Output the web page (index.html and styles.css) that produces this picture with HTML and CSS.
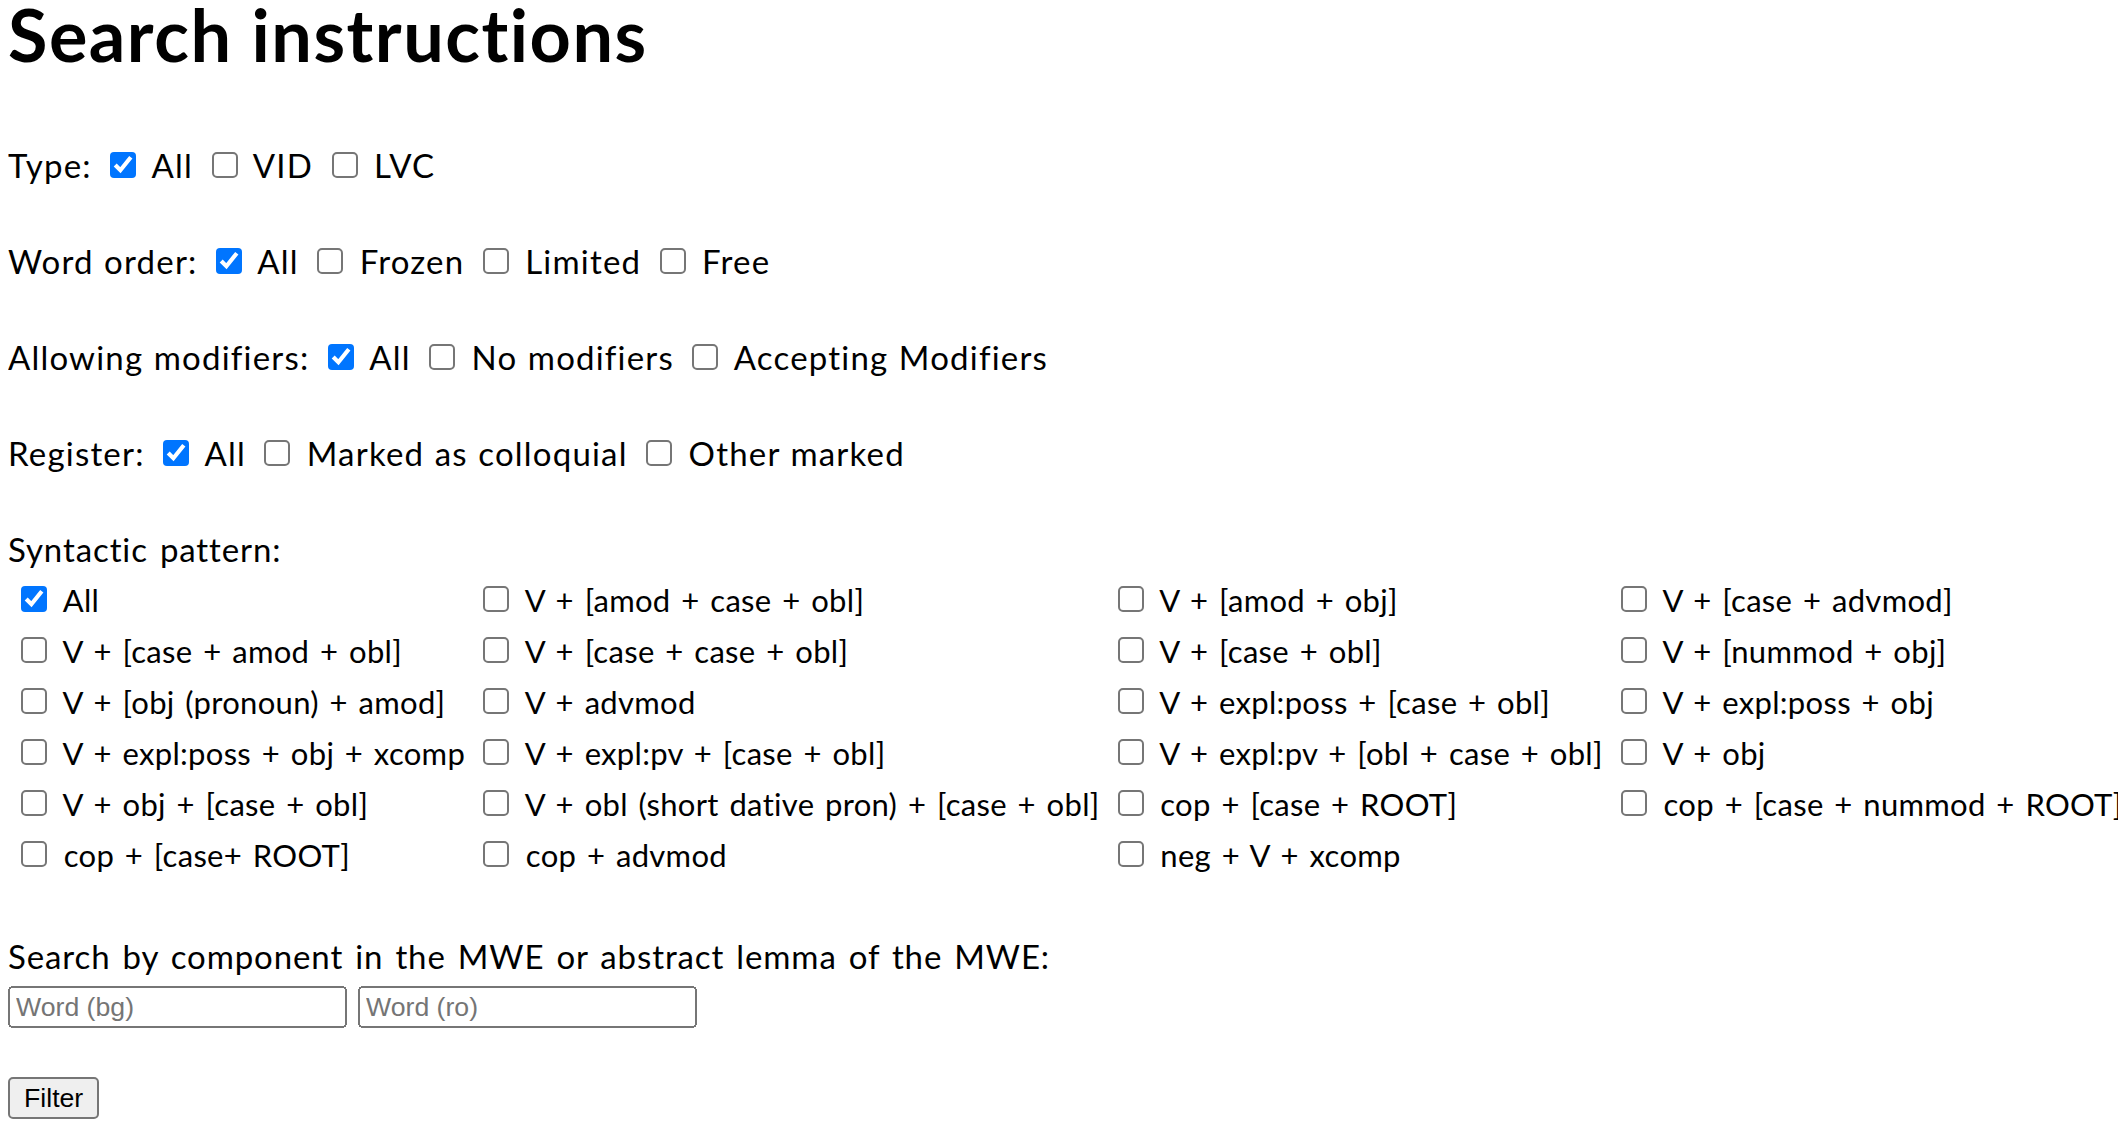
FILE: index.html
```html
<!DOCTYPE html>
<html lang="en">
<head>
<meta charset="utf-8">
<title>Search instructions</title>
<link rel="stylesheet" href="styles.css">
</head>
<body>
<h1 class="title">Search instructions</h1>
<form class="search-form">
  <div class="filter-row">Type: <input type="checkbox" checked> All <input type="checkbox"> VID <input type="checkbox"> LVC</div>
  <div class="filter-row">Word order: <input type="checkbox" checked> All <input type="checkbox"> Frozen <input type="checkbox"> Limited <input type="checkbox"> Free</div>
  <div class="filter-row">Allowing modifiers: <input type="checkbox" checked> All <input type="checkbox"> No modifiers <input type="checkbox"> Accepting Modifiers</div>
  <div class="filter-row">Register: <input type="checkbox" checked> All <input type="checkbox"> Marked as colloquial <input type="checkbox"> Other marked</div>
  <div class="filter-row section-label">Syntactic pattern:</div>
  <div class="pattern-grid">
    <label class="pattern"><input type="checkbox" checked> All</label>
    <label class="pattern"><input type="checkbox"> V + [amod + case + obl]</label>
    <label class="pattern"><input type="checkbox"> V + [amod + obj]</label>
    <label class="pattern"><input type="checkbox"> V + [case + advmod]</label>
    <label class="pattern"><input type="checkbox"> V + [case + amod + obl]</label>
    <label class="pattern"><input type="checkbox"> V + [case + case + obl]</label>
    <label class="pattern"><input type="checkbox"> V + [case + obl]</label>
    <label class="pattern"><input type="checkbox"> V + [nummod + obj]</label>
    <label class="pattern"><input type="checkbox"> V + [obj (pronoun) + amod]</label>
    <label class="pattern"><input type="checkbox"> V + advmod</label>
    <label class="pattern"><input type="checkbox"> V + expl:poss + [case + obl]</label>
    <label class="pattern"><input type="checkbox"> V + expl:poss + obj</label>
    <label class="pattern"><input type="checkbox"> V + expl:poss + obj + xcomp</label>
    <label class="pattern"><input type="checkbox"> V + expl:pv + [case + obl]</label>
    <label class="pattern"><input type="checkbox"> V + expl:pv + [obl + case + obl]</label>
    <label class="pattern"><input type="checkbox"> V + obj</label>
    <label class="pattern"><input type="checkbox"> V + obj + [case + obl]</label>
    <label class="pattern"><input type="checkbox"> V + obl (short dative pron) + [case + obl]</label>
    <label class="pattern"><input type="checkbox"> cop + [case + ROOT]</label>
    <label class="pattern"><input type="checkbox"> cop + [case + nummod + ROOT]</label>
    <label class="pattern"><input type="checkbox"> cop + [case+ ROOT]</label>
    <label class="pattern"><input type="checkbox"> cop + advmod</label>
    <label class="pattern"><input type="checkbox"> neg + V + xcomp</label>
  </div>
  <div class="filter-row section-label">Search by component in the MWE or abstract lemma of the MWE:</div>
  <div class="word-inputs">
    <input class="word-input" type="text" placeholder="Word (bg)">
    <input class="word-input" type="text" placeholder="Word (ro)">
  </div>
  <div class="actions"><button class="filter-button" type="button">Filter</button></div>
</form>
</body>
</html>
```
FILE: styles.css
```css
body {
  margin: 0 8px;
  font-family: "Lato", "Open Sans", sans-serif;
  font-size: 33px;
  letter-spacing: 1.2px;
  word-spacing: 0.8px;
  color: #000;
  background: #fff;
}

.title {
  margin: 0;
  font-size: 72px;
  line-height: 68px;
  font-weight: 700;
  letter-spacing: 1.5px;
  word-spacing: 0;
}

.search-form {
  margin-top: 73px;
}

.filter-row {
  line-height: 48px;
  height: 48px;
  margin-bottom: 48px;
  white-space: nowrap;
}

.section-label {
  margin-bottom: 0;
  letter-spacing: 0.9px;
  word-spacing: 2.7px;
}

.pattern-grid {
  display: grid;
  grid-template-columns: repeat(4, max-content);
  margin-bottom: 53px;
}

.pattern {
  display: block;
  padding: 3px 5px 0;
  font-size: 31px;
  line-height: 48px;
  height: 48px;
  letter-spacing: 0.3px;
  word-spacing: 2.5px;
  white-space: nowrap;
}

input[type="checkbox"] {
  zoom: 2;
}

.word-inputs {
  display: flex;
  gap: 11px;
  padding-top: 6px;
}

.word-input {
  zoom: 2;
  box-sizing: border-box;
  width: 169.5px;
  height: 21px;
  margin: 0;
  font-family: "Liberation Sans", Arial, sans-serif;
  font-size: 13.333px;
  letter-spacing: normal;
  word-spacing: normal;
}

.actions {
  display: flex;
  margin-top: 49px;
}

.filter-button {
  zoom: 2;
  height: 21px;
  margin: 0;
  font-family: "Liberation Sans", Arial, sans-serif;
  font-size: 13.333px;
  letter-spacing: normal;
  word-spacing: normal;
}
```
